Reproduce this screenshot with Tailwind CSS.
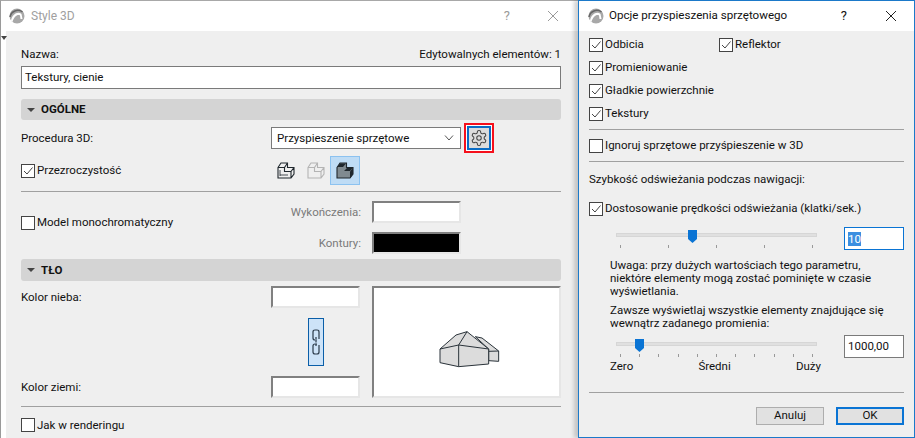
<!DOCTYPE html>
<html lang="pl">
<head>
    <meta charset="UTF-8">
    <meta name="viewport" content="width=device-width, initial-scale=1.0">
    <title>Style 3D</title>
    <script src="https://cdn.jsdelivr.net/npm/@tailwindcss/browser@4"></script>
</head>
<body class="w-[915px] h-[438px] overflow-hidden bg-white">
<div class="flex h-[438px] w-[915px] font-['Roboto',sans-serif] text-[11.5px] text-[#111]">

    <!-- Style 3D window -->
    <div class="w-[578px] h-full flex flex-col border-l border-l-[#9a9a9a] border-t border-t-[#a8a8a8]">
        <div class="h-[30px] flex items-center bg-white pl-[8px] shrink-0">
            <svg width="16" height="16" viewBox="0 0 16 16" class="shrink-0"><circle cx="8" cy="8" r="7.500" fill="#a8a8a8"/><path d="M2 13 C3 6 9 3 12.500 6 L13.500 11 L11.500 11 L11 7.500 C9 6 5 8 3.500 14Z" fill="#fff"/><path d="M1 9 C2 3 9 0.500 13.500 4" fill="none" stroke="#666" stroke-width="1.500"/></svg>
            <span class="ml-[6px] text-[12px] text-[#a0a0a0]">Style 3D</span>
            <span class="ml-auto mr-[37px] text-[13px] text-[#9a9a9a]">?</span>
            <svg width="12" height="12" viewBox="0 0 12 12" class="mr-[19px]"><path d="M1 1 L11 11 M11 1 L1 11" stroke="#9a9a9a" stroke-width="1"/></svg>
        </div>
        <div class="flex flex-1">
            <div class="w-[5px] bg-white relative">
                <div class="absolute left-0 top-[5px] w-0 h-0 border-x-[3px] border-x-transparent border-t-[4px] border-t-[#444]"></div>
            </div>
            <div class="flex-1 flex flex-col bg-[#efefef] pl-[15px] pr-[17px]">
                <div class="h-[35px] pt-[15px] flex justify-between leading-[16px]">
                    <span>Nazwa:</span>
                    <span>Edytowalnych elementów: 1</span>
                </div>
                <div class="h-[23px] bg-white border border-[#7a7a7a] flex items-center px-[3px] pt-px">Tekstury, cienie</div>

                <div class="mt-[10px] h-[21px] bg-[#d4d4d4] rounded-[3px] flex items-center pl-[6px] font-bold gap-[6px]">
                    <span class="w-0 h-0 border-x-[4px] border-x-transparent border-t-[4px] border-t-[#444]"></span>
                    <span class="pt-px">OGÓLNE</span>
                </div>

                <div class="mt-[3px] h-[30px] flex items-center">
                    <span class="w-[250px] pt-px">Procedura 3D:</span>
                    <div class="w-[190px] h-[22px] bg-white border border-[#7a7a7a] flex items-center justify-between pl-[5px] pr-[6px]">
                        <span class="pt-px">Przyspieszenie sprzętowe</span>
                        <svg width="10" height="6" viewBox="0 0 10 6"><path d="M1 0.500 L5 5 L9 0.500" fill="none" stroke="#555"/></svg>
                    </div>
                    <div class="ml-[3px] w-[30px] h-[30px] border-2 border-[#f5101c] bg-white p-px">
                        <div class="w-full h-full border-2 border-[#0a6cc4] bg-[#dcdcdc] flex items-center justify-center">
                            <svg width="18" height="18" viewBox="0 0 24 24" fill="none" stroke="#444" stroke-width="1.400"><path d="M12.220 2h-.44a2 2 0 0 0-2 2v.18a2 2 0 0 1-1 1.730l-.43.250a2 2 0 0 1-2 0l-.15-.080a2 2 0 0 0-2.730.730l-.22.380a2 2 0 0 0 .730 2.730l.15.100a2 2 0 0 1 1 1.720v.510a2 2 0 0 1-1 1.740l-.15.090a2 2 0 0 0-.730 2.730l.22.380a2 2 0 0 0 2.730.730l.15-.080a2 2 0 0 1 2 0l.43.250a2 2 0 0 1 1 1.730V20a2 2 0 0 0 2 2h.44a2 2 0 0 0 2-2v-.18a2 2 0 0 1 1-1.730l.43-.250a2 2 0 0 1 2 0l.15.080a2 2 0 0 0 2.730-.730l.22-.390a2 2 0 0 0-.730-2.730l-.15-.080a2 2 0 0 1-1-1.740v-.500a2 2 0 0 1 1-1.740l.15-.090a2 2 0 0 0 .730-2.730l-.22-.380a2 2 0 0 0-2.730-.730l-.15.080a2 2 0 0 1-2 0l-.43-.250a2 2 0 0 1-1-1.730V4a2 2 0 0 0-2-2z"/><circle cx="12" cy="12" r="3"/></svg>
                        </div>
                    </div>
                </div>

                <div class="mt-[3px] h-[29px] flex items-center">
                    <div class="w-[250px] flex items-center gap-[2px]">
                        <svg width="14" height="14" viewBox="0 0 14 14"><rect x="0.500" y="0.500" width="13" height="13" fill="#fff" stroke="#444"/><path d="M3 7 L6 10 L11.500 3.500" fill="none" stroke="#444"/></svg>
                        <span class="pt-px">Przezroczystość</span>
                    </div>
                    <div class="flex items-center">
                        <svg width="18" height="17" viewBox="0 0 18 17" class="ml-[6px]" fill="none" stroke="#1f272d" stroke-width="1.100"><path d="M1 5.500 L4 1 H10.500 V5.500 H17 V12 L14 16 H1Z M1 5.500 H7.500 V9.500 H14 V16 M7.500 5.500 L10.500 1 M14 9.500 L17 5.500"/><path d="M3 14 V8 M3 13 H11" stroke-width="0.800"/></svg>
                        <svg width="18" height="17" viewBox="0 0 18 17" class="ml-[12px]" fill="none" stroke="#b4b4b4" stroke-width="1.100"><path d="M1 5.500 L4 1 H10.500 V5.500 H17 V12 L14 16 H1Z M1 5.500 H7.500 V9.500 H14 V16 M7.500 5.500 L10.500 1 M14 9.500 L17 5.500"/></svg>
                        <div class="ml-[5px] w-[30px] h-[29px] bg-[#bfdcf5] border border-[#8cc2f0] flex items-center justify-center">
                            <svg width="18" height="17" viewBox="0 0 18 17"><path d="M1 5.500 L4 1 H10.500 V5.500 H17 V12 L14 16 H1Z" fill="#808a90" stroke="#1f272d" stroke-width="1.100"/><path d="M4 1.500 H10 L7 5 H1.500Z M11 6 H16.500 L14 9 H8Z" fill="#1f272d"/><path d="M14 9.500 L17 5.500 V12 L14 16Z" fill="#1f272d"/></svg>
                        </div>
                    </div>
                </div>

                <div class="mt-[6px] h-px bg-[#a0a0a0] shrink-0"></div>

                <div class="mt-[9px] flex">
                    <div class="flex-1 flex items-center gap-[2px] pb-[10px]">
                        <span class="w-[14px] h-[14px] bg-white border border-[#444]"></span>
                        <span class="pt-px">Model monochromatyczny</span>
                    </div>
                    <div class="flex flex-col gap-[9px] mr-[100px]">
                        <div class="flex items-center justify-end">
                            <span class="mr-[11px] pt-px text-[#7a7a7a]">Wykończenia:</span>
                            <span class="w-[89px] h-[22px] bg-white border-2 border-t-[#808080] border-l-[#808080] border-b-[#e6e6e6] border-r-[#e6e6e6]"></span>
                        </div>
                        <div class="flex items-center justify-end">
                            <span class="mr-[11px] pt-px text-[#7a7a7a]">Kontury:</span>
                            <span class="w-[89px] h-[22px] bg-black border-2 border-t-[#808080] border-l-[#808080] border-b-[#e6e6e6] border-r-[#e6e6e6]"></span>
                        </div>
                    </div>
                </div>

                <div class="mt-[5px] h-[22px] bg-[#d4d4d4] rounded-[3px] flex items-center pl-[6px] font-bold gap-[6px]">
                    <span class="w-0 h-0 border-x-[4px] border-x-transparent border-t-[4px] border-t-[#444]"></span>
                    <span class="pt-px">TŁO</span>
                </div>

                <div class="mt-[5px] h-[112px] flex">
                    <div class="w-[250px] flex flex-col justify-between">
                        <span class="h-[22px] pt-px flex items-center">Kolor nieba:</span>
                        <span class="h-[22px] pt-px flex items-center">Kolor ziemi:</span>
                    </div>
                    <div class="w-[89px] flex flex-col justify-between items-center">
                        <span class="w-full h-[22px] bg-white border-2 border-t-[#808080] border-l-[#808080] border-b-[#e6e6e6] border-r-[#e6e6e6]"></span>
                        <div class="w-[16px] h-[48px] bg-[#cde3f8] border border-[#0a5ea8] flex items-center justify-center">
                            <svg width="8" height="26" viewBox="0 0 8 26" fill="none" stroke="#2a3a4a" stroke-width="1.200"><path d="M7 10 V3 Q7 1 5 1 H3 Q1 1 1 3 V9 Q1 11 3 11 H5 M7 16 V23 Q7 25 5 25 H3 Q1 25 1 23 V17 Q1 15 3 15 H5"/><path d="M4 8 V18" stroke-dasharray="2 1.500"/></svg>
                        </div>
                        <span class="w-full h-[22px] bg-white border-2 border-t-[#808080] border-l-[#808080] border-b-[#e6e6e6] border-r-[#e6e6e6]"></span>
                    </div>
                    <div class="ml-[12px] w-[189px] h-full bg-white border-2 border-t-[#808080] border-l-[#808080] border-b-[#e6e6e6] border-r-[#e6e6e6] pl-[63px] pt-[41px]">
                        <svg width="65" height="40" viewBox="50 25 195 120" fill="#dcdcdc" stroke="#2a333a" stroke-width="3" stroke-linejoin="round">
                            <path d="M165 48 L185 52 L235 91 V122 L205 120 V85Z"/>
                            <path d="M205 92 L235 91" fill="none"/>
                            <path d="M59 85 L107 43 L140 33 L205 85 V130 L115 138 L59 126Z"/>
                            <path d="M59 85 L115 73 L205 85 M115 73 V138 M115 73 L140 33" fill="none"/>
                        </svg>
                    </div>
                </div>

                <div class="mt-[8px] h-px bg-[#a0a0a0] shrink-0"></div>

                <div class="mt-[9px] flex items-center gap-[2px]">
                    <span class="w-[14px] h-[14px] bg-white border border-[#444]"></span>
                    <span class="pt-px">Jak w renderingu</span>
                </div>
            </div>
        </div>
    </div>

    <!-- Hardware acceleration options window -->
    <div class="w-[337px] h-full flex flex-col border border-[#1b79c9] bg-[#efefef] shadow-[-4px_0_4px_rgba(0,0,0,0.18)] relative">
        <div class="h-[30px] flex items-center bg-white pl-[9px] shrink-0">
            <svg width="16" height="16" viewBox="0 0 16 16" class="shrink-0"><circle cx="8" cy="8" r="7.500" fill="#a8a8a8"/><path d="M2 13 C3 6 9 3 12.500 6 L13.500 11 L11.500 11 L11 7.500 C9 6 5 8 3.500 14Z" fill="#fff"/><path d="M1 9 C2 3 9 0.500 13.500 4" fill="none" stroke="#666" stroke-width="1.500"/></svg>
            <span class="ml-[5px] text-[11.600px]">Opcje przyspieszenia sprzętowego</span>
            <span class="ml-auto mr-[38px] text-[13px]">?</span>
            <svg width="12" height="12" viewBox="0 0 12 12" class="mr-[17px]"><path d="M1 1 L11 11 M11 1 L1 11" stroke="#222" stroke-width="1"/></svg>
        </div>
        <div class="flex-1 flex flex-col pl-[10px] pr-[10px]">
            <div class="mt-[2px] grid grid-cols-[130px_1fr] auto-rows-[23px] items-center">
                <div class="flex items-center gap-[2px]"><svg width="14" height="14" viewBox="0 0 14 14"><rect x="0.500" y="0.500" width="13" height="13" fill="#fff" stroke="#444"/><path d="M3 7 L6 10 L11.500 3.500" fill="none" stroke="#444"/></svg><span class="pt-px">Odbicia</span></div>
                <div class="flex items-center gap-[2px]"><svg width="14" height="14" viewBox="0 0 14 14"><rect x="0.500" y="0.500" width="13" height="13" fill="#fff" stroke="#444"/><path d="M3 7 L6 10 L11.500 3.500" fill="none" stroke="#444"/></svg><span class="pt-px">Reflektor</span></div>
                <div class="col-span-2 flex items-center gap-[2px]"><svg width="14" height="14" viewBox="0 0 14 14"><rect x="0.500" y="0.500" width="13" height="13" fill="#fff" stroke="#444"/><path d="M3 7 L6 10 L11.500 3.500" fill="none" stroke="#444"/></svg><span class="pt-px">Promieniowanie</span></div>
                <div class="col-span-2 flex items-center gap-[2px]"><svg width="14" height="14" viewBox="0 0 14 14"><rect x="0.500" y="0.500" width="13" height="13" fill="#fff" stroke="#444"/><path d="M3 7 L6 10 L11.500 3.500" fill="none" stroke="#444"/></svg><span class="pt-px">Gładkie powierzchnie</span></div>
                <div class="col-span-2 flex items-center gap-[2px]"><svg width="14" height="14" viewBox="0 0 14 14"><rect x="0.500" y="0.500" width="13" height="13" fill="#fff" stroke="#444"/><path d="M3 7 L6 10 L11.500 3.500" fill="none" stroke="#444"/></svg><span class="pt-px">Tekstury</span></div>
            </div>
            <div class="mt-[4px] h-px bg-[#a0a0a0] shrink-0"></div>
            <div class="mt-[4px] h-[23px] flex items-center gap-[2px]">
                <span class="w-[14px] h-[14px] bg-white border border-[#444]"></span>
                <span class="pt-px">Ignoruj sprzętowe przyśpieszenie w 3D</span>
            </div>
            <div class="mt-[4px] h-px bg-[#a0a0a0] shrink-0"></div>
            <div class="mt-[7px] h-[20px] pt-px flex items-center">Szybkość odświeżania podczas nawigacji:</div>
            <div class="mt-[8px] h-[23px] flex items-center gap-[2px]">
                <svg width="14" height="14" viewBox="0 0 14 14"><rect x="0.500" y="0.500" width="13" height="13" fill="#fff" stroke="#444"/><path d="M3 7 L6 10 L11.500 3.500" fill="none" stroke="#444"/></svg>
                <span class="pt-px">Dostosowanie prędkości odświeżania (klatki/sek.)</span>
            </div>

            <div class="mt-[7px] flex items-start">
                <div class="ml-[27px] w-[201px] pt-[6px]">
                    <div class="relative h-[4px] bg-[#e0e0e0] border border-[#d6d6d6]">
                        <svg width="9" height="13" viewBox="0 0 9 13" class="absolute left-[71px] top-[-4px]"><path d="M0 0 H9 V9 L4.500 13 L0 9Z" fill="#0a74d4"/></svg>
                    </div>
                    <div class="mt-[8px] px-[4px] flex justify-between">
                        <span class="w-px h-[3px] bg-[#999]"></span><span class="w-px h-[3px] bg-[#999]"></span><span class="w-px h-[3px] bg-[#999]"></span><span class="w-px h-[3px] bg-[#999]"></span><span class="w-px h-[3px] bg-[#999]"></span>
                    </div>
                </div>
                <div class="ml-[27px] w-[60px] h-[23px] bg-white border border-[#0a74d4] flex items-center px-[3px]">
                    <span class="bg-[#3b8fe0] text-white leading-[14px]">10</span>
                </div>
            </div>

            <div class="mt-[9px] ml-[21px] leading-[13px]">
                <p>Uwaga: przy dużych wartościach tego parametru,<br>niektóre elementy mogą zostać pominięte w czasie<br>wyświetlania.</p>
                <p class="mt-[6px]">Zawsze wyświetlaj wszystkie elementy znajdujące się<br>wewnątrz zadanego promienia:</p>
            </div>

            <div class="mt-[5px] flex items-start">
                <div class="ml-[27px] w-[201px] pt-[7px]">
                    <div class="relative h-[4px] bg-[#e0e0e0] border border-[#d6d6d6]">
                        <svg width="9" height="13" viewBox="0 0 9 13" class="absolute left-[18px] top-[-4px]"><path d="M0 0 H9 V9 L4.500 13 L0 9Z" fill="#0a74d4"/></svg>
                    </div>
                    <div class="mt-[8px] px-[4px] flex justify-between">
                        <span class="w-px h-[3px] bg-[#999]"></span><span class="w-px h-[3px] bg-[#999]"></span><span class="w-px h-[3px] bg-[#999]"></span><span class="w-px h-[3px] bg-[#999]"></span><span class="w-px h-[3px] bg-[#999]"></span><span class="w-px h-[3px] bg-[#999]"></span><span class="w-px h-[3px] bg-[#999]"></span><span class="w-px h-[3px] bg-[#999]"></span><span class="w-px h-[3px] bg-[#999]"></span><span class="w-px h-[3px] bg-[#999]"></span><span class="w-px h-[3px] bg-[#999]"></span>
                    </div>
                </div>
                <div class="ml-[27px] w-[60px] h-[23px] bg-white border border-[#7a7a7a] flex items-center px-[3px]">1000,00</div>
            </div>

            <div class="ml-[21px] w-[211px] flex justify-between h-[17px] items-center">
                <span>Zero</span><span>Średni</span><span>Duży</span>
            </div>

            <div class="mt-[17px] h-px bg-[#a0a0a0] shrink-0"></div>

            <div class="mt-[14px] flex justify-end gap-[12px]">
                <div class="w-[68px] h-[18px] bg-[#e1e1e1] border border-[#adadad] flex items-center justify-center">Anuluj</div>
                <div class="w-[68px] h-[18px] bg-[#e1e1e1] border-2 border-[#0a74d4] flex items-center justify-center">OK</div>
            </div>
        </div>
    </div>
</div>
</body>
</html>
